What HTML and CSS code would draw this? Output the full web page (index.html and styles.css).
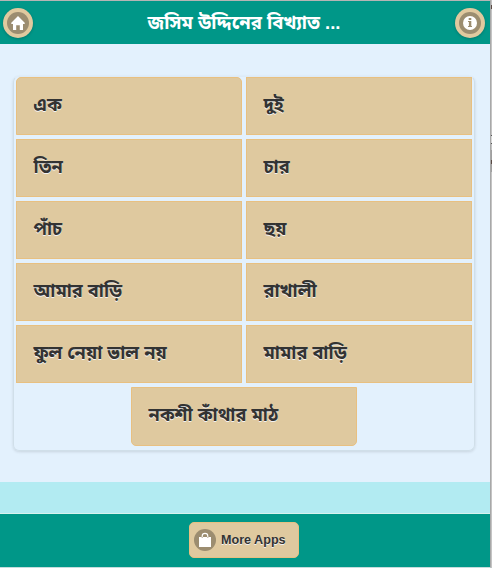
FILE: index.html
```html
<!DOCTYPE html>
<html lang="bn">
<head>
<meta charset="utf-8">
<title>জসিম উদ্দিনের বিখ্যাত কবিতা</title>
<link rel="stylesheet" href="styles.css">
</head>
<body>
<div class="page">
  <header class="header">
    <a class="round"><svg width="22" height="22" viewBox="0 0 22 22"><circle cx="11" cy="11" r="11" fill="#9c8d70"/><path fill="#fff" d="M11 4L4.3 10.7V12H6v6h3.2v-4.8h3.6V18H16v-6h1.7v-1.3z"/></svg></a>
    <h1 class="title">জসিম উদ্দিনের বিখ্যাত ...</h1>
    <a class="round"><svg width="22" height="22" viewBox="0 0 22 22"><circle cx="11" cy="11" r="11" fill="#9c8d70"/><circle cx="11" cy="11" r="7" fill="#fff"/><path fill="#9c8d70" d="M9.7 6h2.6v2H9.7zM9 9h3.3v5H13v1H9v-1h.9v-4H9z"/></svg></a>
  </header>
  <main class="content">
    <nav class="group">
      <a class="tile first">এক</a>
      <a class="tile">দুই</a>
      <a class="tile">তিন</a>
      <a class="tile">চার</a>
      <a class="tile">পাঁচ</a>
      <a class="tile">ছয়</a>
      <a class="tile">আমার বাড়ি</a>
      <a class="tile">রাখালী</a>
      <a class="tile">ফুল নেয়া ভাল নয়</a>
      <a class="tile">মামার বাড়ি</a>
      <a class="tile last">নকশী কাঁথার মাঠ</a>
    </nav>
  </main>
  <div class="band"></div>
  <footer class="footer">
    <a class="more"><svg width="22" height="22" viewBox="0 0 22 22"><circle cx="11" cy="11" r="11" fill="#9c8d70"/><path fill="#fff" d="M5 8h12v10H5z"/><path fill="none" stroke="#fff" stroke-width="1.1" d="M8.2 8V7a2.8 2.6 0 0 1 5.6 0V8"/><path fill="none" stroke="#9c8d70" stroke-width=".8" d="M8.2 8v1M13.8 8v1"/></svg><span>More Apps</span></a>
  </footer>
</div>
<div class="edge"></div>
</body>
</html>
```
FILE: styles.css
```css
* { box-sizing: border-box; }
body {
  margin: 0;
  height: 568px;
  overflow: hidden;
  display: flex;
  background: #c4c4c4;
  font-family: "Liberation Sans", "Noto Sans Bengali", sans-serif;
}
svg { display: block; flex: none; }
.page {
  flex: none;
  width: 491px;
  height: 568px;
  display: flex;
  flex-direction: column;
  border-top: 1px solid #b5b5b5;
  border-right: 1px solid #a8a8a8;
  border-bottom: 1px solid #c5dcdc;
}
/* Sliver of the window behind the page */
.edge {
  width: 1px;
  background: linear-gradient(
    #c4c4c4 5px, #5a4a44 5px 9px, #c4c4c4 9px 135px,
    #555 135px 136px, #d8d8d8 136px 143px, #555 143px 144px,
    #c4c4c4 144px 150px, #a0a0a0 150px 160px, #5a4a44 160px 164px,
    #a0a0a0 164px 172px, #c4c4c4 172px);
}
.header {
  height: 43px;
  padding: 0 5px 0 3px;
  display: flex;
  align-items: center;
  justify-content: space-between;
  background: #009788;
}
.round {
  width: 30px;
  height: 30px;
  padding: 4px;
  border-radius: 50%;
  background: #e0c99f;
  box-shadow: 0 1px 3px rgba(0, 0, 0, .2);
}
.title {
  margin: 0;
  font-size: 18.5px;
  line-height: 30px;
  color: #fff;
  white-space: nowrap;
}
.content {
  height: 438px;
  padding: 32px 15px 0 13px;
  background: #e3f1fd;
}
.group {
  width: 462px;
  height: 375px;
  padding: 0 2px;
  border: 1px solid #d0dfe9;
  border-top-color: #deebf6;
  border-radius: 6px;
  box-shadow: 0 1px 3px rgba(0, 0, 0, .12);
  display: grid;
  grid-template-columns: 226px 226px;
  grid-auto-rows: 58px;
  gap: 4px;
}
.tile {
  padding: 0 16.5px;
  border: 1px solid #e8c081;
  background: #dfc99f;
  color: #333;
  font-size: 18.2px;
  font-weight: 700;
  line-height: 54px;
  white-space: nowrap;
  text-shadow: 0 1px 0 #f3f3f3;
}
.first { border-radius: 5px 5px 0 0; }
.last {
  grid-column: 1 / -1;
  justify-self: center;
  width: 226px;
  height: 59px;
  border-radius: 0 0 5px 5px;
}
.band {
  height: 32px;
  background: #b2ebf2;
  border-bottom: 1px solid #d8f2ee;
}
.footer {
  flex: 1;
  display: flex;
  justify-content: center;
  align-items: flex-start;
  padding: 8px 2px 0 0;
  background: #009788;
}
.more {
  width: 110px;
  height: 36px;
  padding-left: 4px;
  display: flex;
  align-items: center;
  gap: 5px;
  border: 1px solid #e8c081;
  border-radius: 5px;
  background: #dfc99f;
  color: #333;
  font-size: 12.6px;
  font-weight: 700;
  text-shadow: 0 1px 0 #f3f3f3;
}
```
